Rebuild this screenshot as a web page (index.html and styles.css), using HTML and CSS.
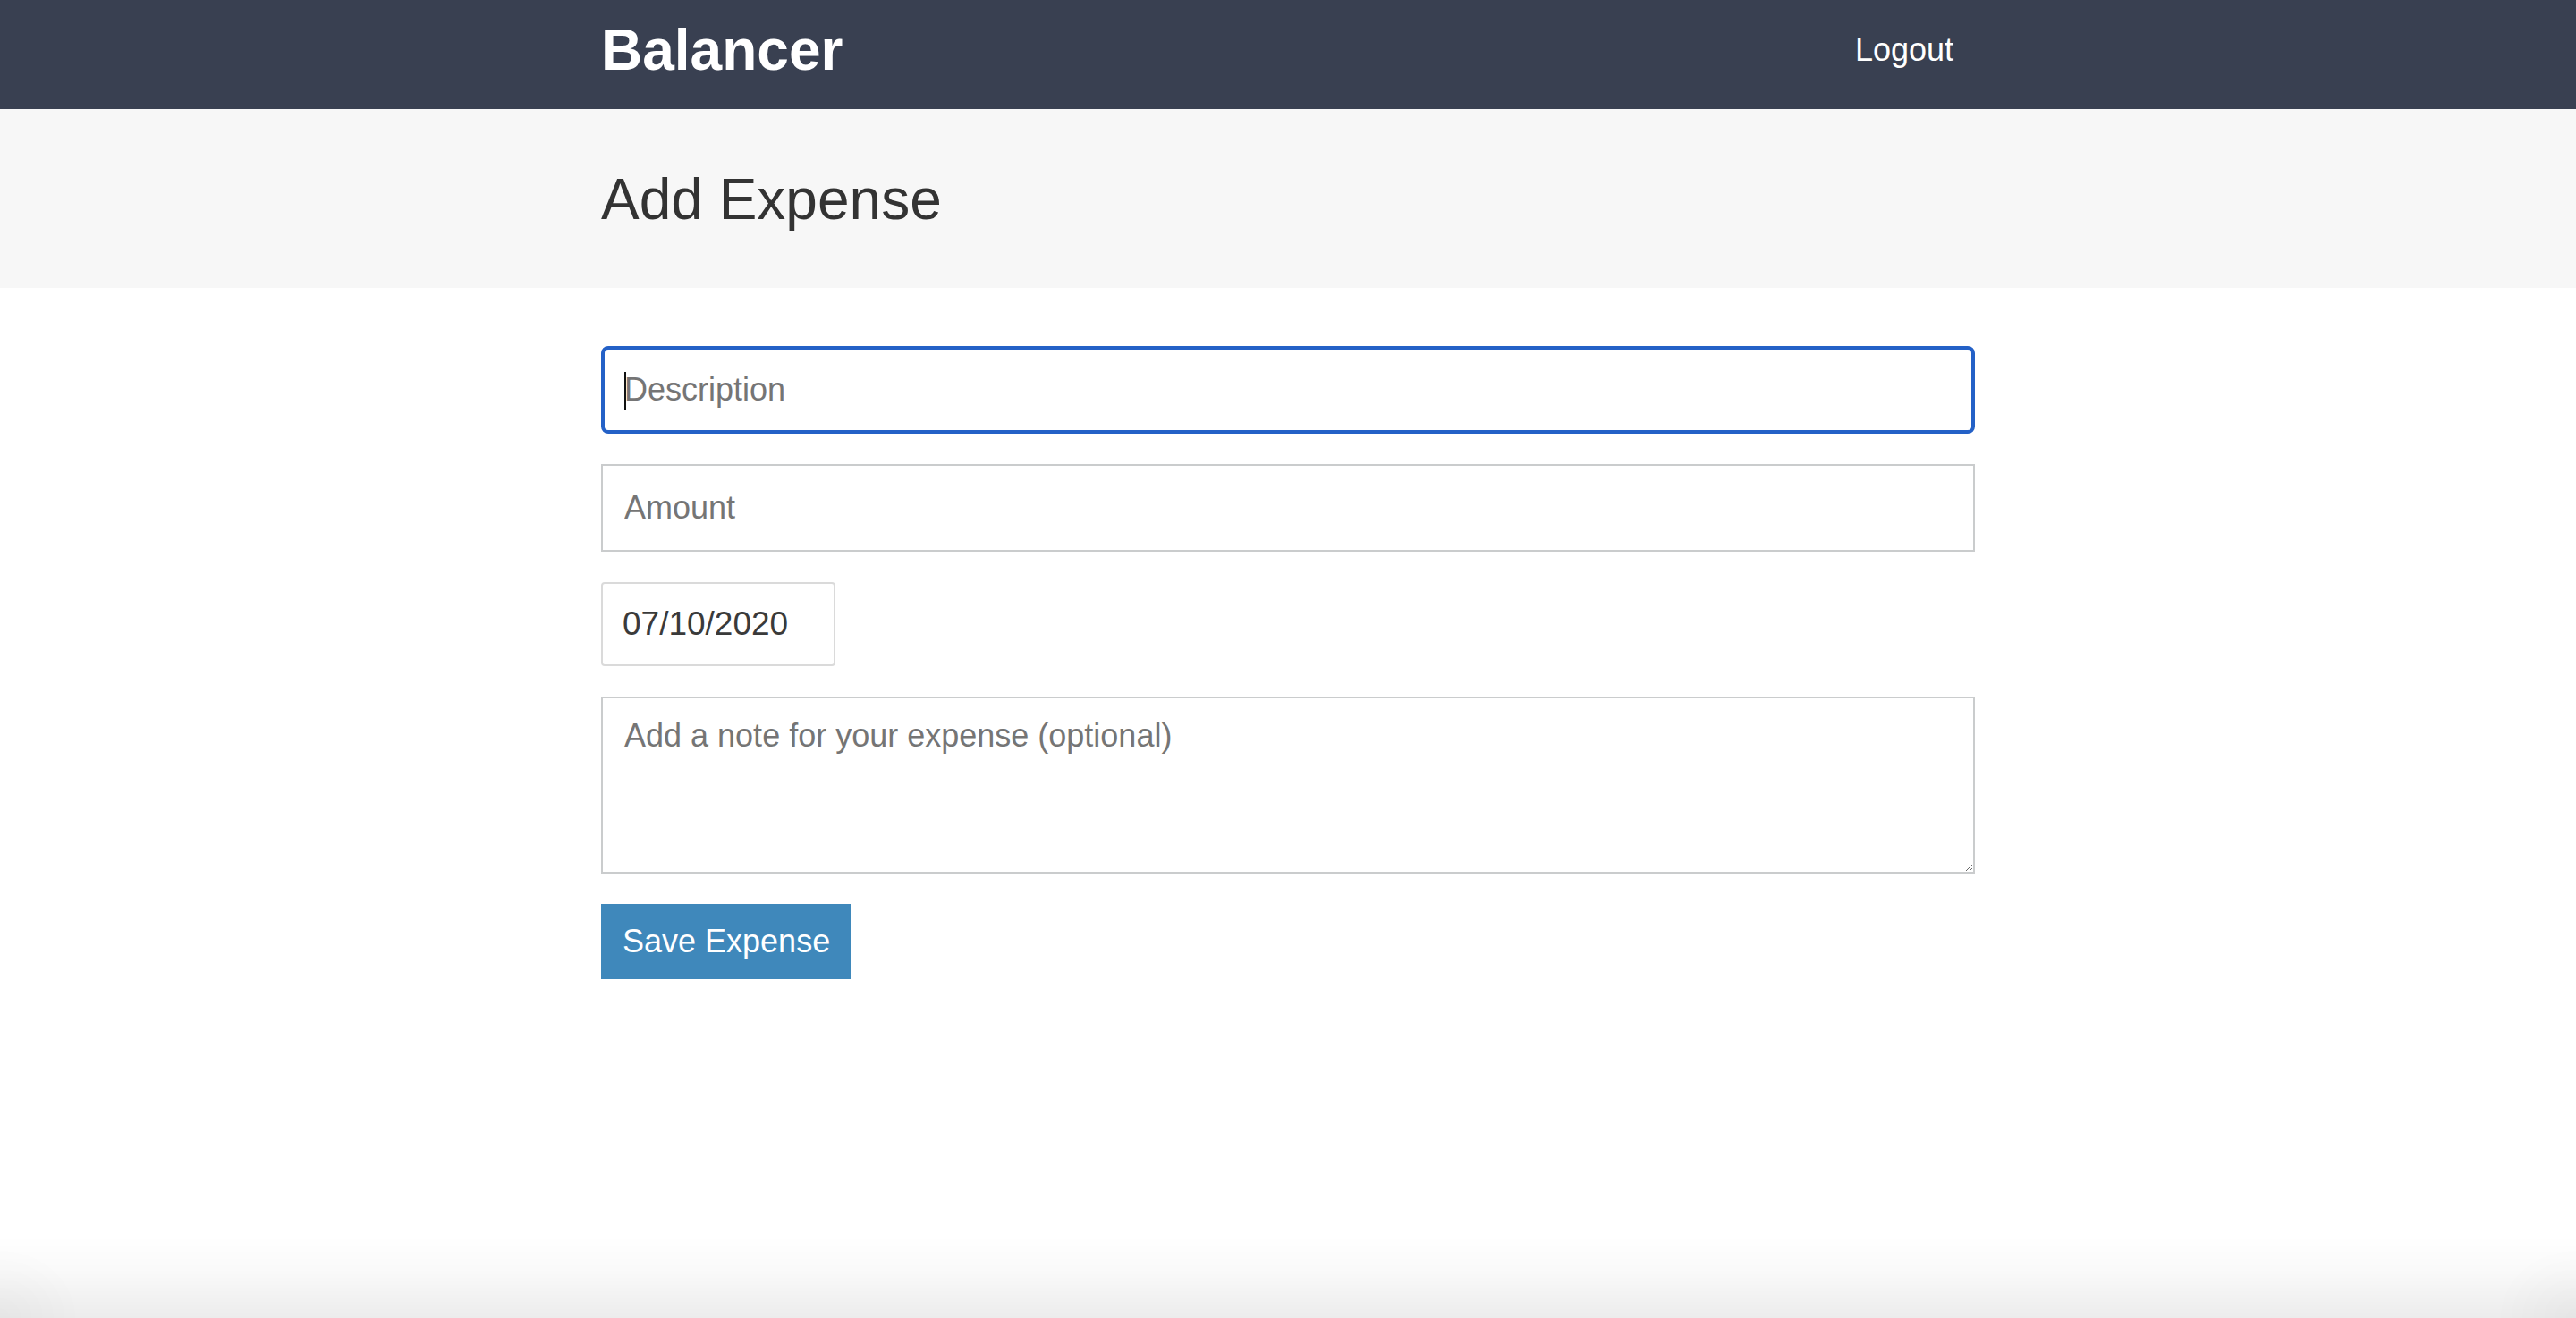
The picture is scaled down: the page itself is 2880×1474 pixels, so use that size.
FILE: index.html
```html
<!DOCTYPE html>
<html lang="en">
<head>
<meta charset="utf-8">
<title>Balancer</title>
<link rel="stylesheet" href="styles.css">
</head>
<body>
  <header class="header">
    <div class="container header__content">
      <a class="header__title" href="#"><h1>Balancer</h1></a>
      <button class="button button--link">Logout</button>
    </div>
  </header>
  <div class="page-header">
    <div class="container">
      <h1 class="page-header__title">Add Expense</h1>
    </div>
  </div>
  <div class="container">
    <form class="form">
      <div class="field">
        <input class="text-input text-input--focus" type="text" placeholder="Description">
        <span class="caret"></span>
      </div>
      <input class="text-input" type="text" placeholder="Amount">
      <input class="date-input" type="text" value="07/10/2020">
      <textarea class="textarea" placeholder="Add a note for your expense (optional)"></textarea>
      <div>
        <button class="button" type="button">Save Expense</button>
      </div>
    </form>
  </div>
  <div class="window-shade"></div>
</body>
</html>
```

FILE: styles.css
```css
html, body {
  margin: 0;
  padding: 0;
  background: #ffffff;
}

body {
  color: #333333;
  font-family: "Liberation Sans", Helvetica, Arial, sans-serif;
  font-size: 32px;
  min-height: 1474px;
}

.container {
  width: 1536px;
  margin: 0 auto;
}

.header {
  background: #394051;
  height: 122px;
}

.header__content {
  height: 112px;
  padding-bottom: 10px;
  display: flex;
  align-items: center;
  justify-content: space-between;
}

.header__title {
  color: #ffffff;
  text-decoration: none;
}

.header__title h1 {
  margin: 0;
  font-size: 64px;
  font-weight: 700;
  line-height: 64px;
}

.button {
  background: #3f88bb;
  border: none;
  color: #ffffff;
  display: inline-block;
  font-family: "Liberation Sans", Helvetica, Arial, sans-serif;
  font-size: 36px;
  font-weight: 300;
  line-height: 1;
  padding: 24px 23px 24px 24px;
  margin: 0;
  cursor: pointer;
}

.button--link {
  background: none;
  padding: 24px;
}

.page-header {
  background: #f7f7f7;
  padding: 65px 0 63px;
  margin-bottom: 65px;
}

.page-header__title {
  margin: 0;
  font-size: 64px;
  font-weight: 300;
  line-height: 72px;
  color: #333333;
}

.form {
  display: flex;
  flex-direction: column;
  align-items: flex-start;
  gap: 34px;
}

.field {
  position: relative;
  width: 100%;
}

.text-input,
.date-input,
.textarea {
  box-sizing: border-box;
  font-family: "Liberation Sans", Helvetica, Arial, sans-serif;
  font-size: 36px;
  margin: 0;
  outline: none;
  background: #ffffff;
}

.text-input {
  display: block;
  width: 1536px;
  height: 98px;
  border: 2px solid #cacccd;
  padding: 0 24px;
  color: #333333;
}

.text-input--focus {
  border: 4px solid #2461c7;
  border-radius: 8px;
  padding: 0 22px;
}

.caret {
  position: absolute;
  left: 26px;
  top: 29px;
  width: 2px;
  height: 42px;
  background: #111111;
}

.date-input {
  width: 262px;
  height: 94px;
  border: 2px solid #dadada;
  border-radius: 4px;
  padding: 0 22px;
  font-size: 37px;
  color: #3a3a3a;
}

.textarea {
  width: 1536px;
  height: 198px;
  border: 2px solid #cacccd;
  padding: 21px 24px 24px;
  line-height: normal;
  color: #333333;
  resize: both;
}

.text-input::placeholder,
.textarea::placeholder {
  color: #757575;
  opacity: 1;
}

.window-shade {
  position: fixed;
  left: 0;
  right: 0;
  bottom: 0;
  height: 92px;
  pointer-events: none;
  background:
    radial-gradient(ellipse 90px 80px at 0 100%, rgba(0, 0, 0, 0.03), rgba(0, 0, 0, 0) 100%),
    radial-gradient(ellipse 90px 80px at 100% 100%, rgba(0, 0, 0, 0.03), rgba(0, 0, 0, 0) 100%),
    linear-gradient(to bottom, rgba(0, 0, 0, 0) 0%, rgba(0, 0, 0, 0.02) 40%, rgba(0, 0, 0, 0.075) 100%);
}
```
